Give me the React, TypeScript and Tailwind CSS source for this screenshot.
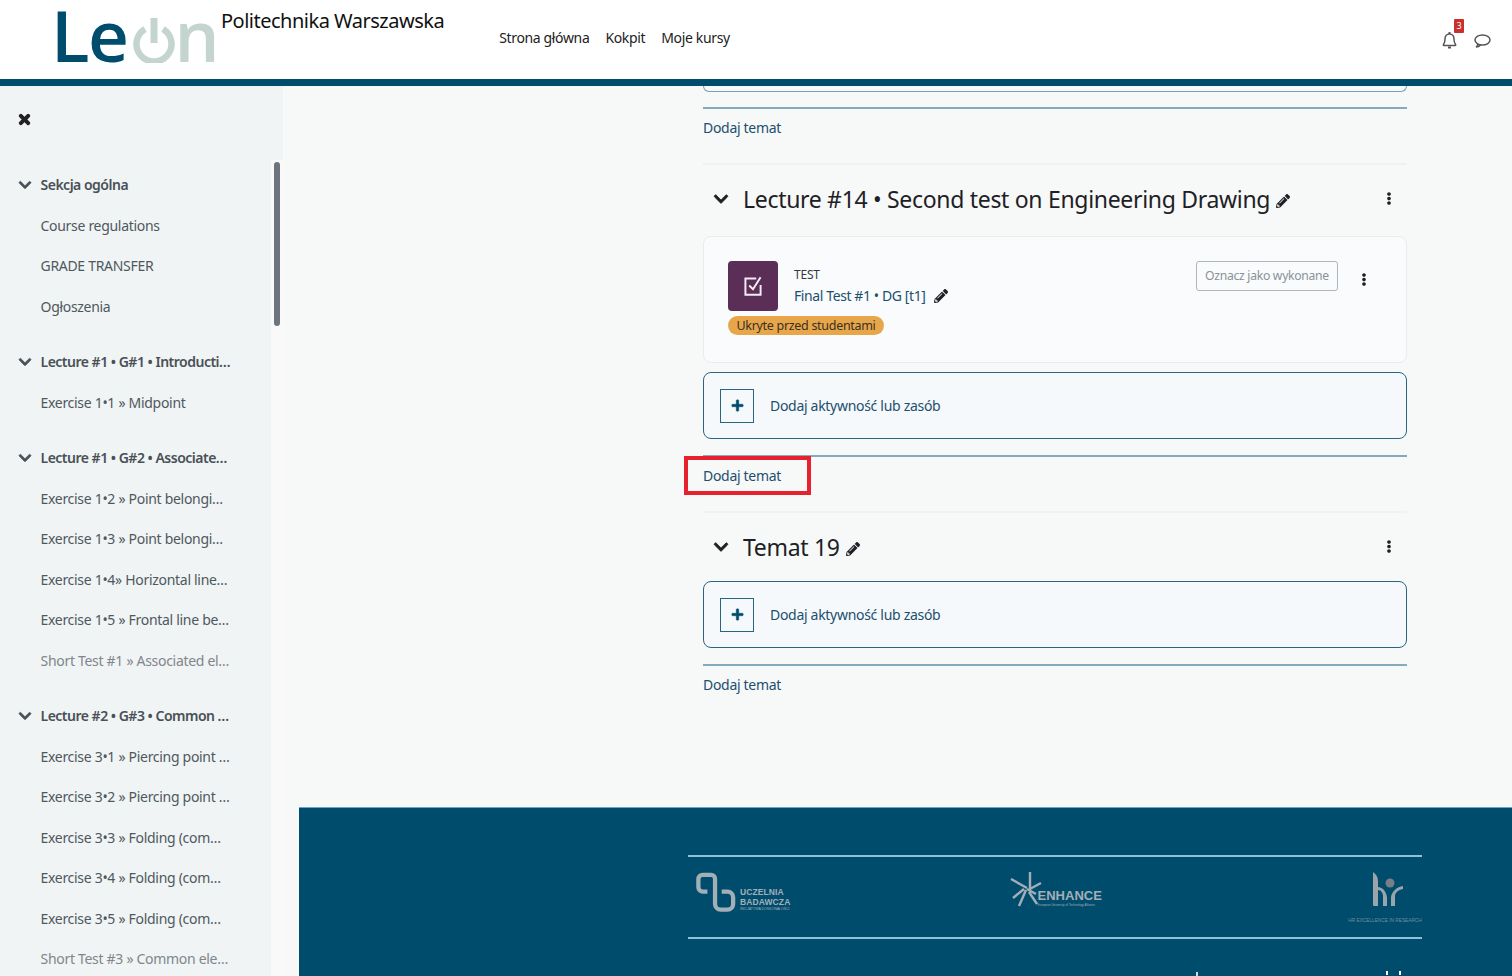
import { FaChevronDown, FaEllipsisV, FaPencilAlt, FaPlus, FaTimes } from "react-icons/fa";

const outline = [
  { title: "Sekcja ogólna", items: ["Course regulations", "GRADE TRANSFER", "Ogłoszenia"] },
  { title: "Lecture #1 • G#1 • Introducti…", items: ["Exercise 1•1 » Midpoint"] },
  {
    title: "Lecture #1 • G#2 • Associate…",
    items: [
      "Exercise 1•2 » Point belongi…",
      "Exercise 1•3 » Point belongi…",
      "Exercise 1•4» Horizontal line…",
      "Exercise 1•5 » Frontal line be…",
      "Short Test #1 » Associated el…",
    ],
  },
  {
    title: "Lecture #2 • G#3 • Common …",
    items: [
      "Exercise 3•1 » Piercing point …",
      "Exercise 3•2 » Piercing point …",
      "Exercise 3•3 » Folding (com…",
      "Exercise 3•4 » Folding (com…",
      "Exercise 3•5 » Folding (com…",
      "Short Test #3 » Common ele…",
    ],
  },
];

function Header() {
  return (
    <header className="h-[86px] shrink-0 bg-white border-b-[7px] border-[#004c6d] flex items-start">
      <div className="ml-[51px] mt-[5px] w-[167px] flex items-start font-['Open_Sans'] font-semibold text-[71px] leading-[60px] tracking-[-1.5px]">
        <span className="text-[#004c6d]">Le</span>
        <svg viewBox="0 0 42 45" className="w-[42px] h-[45px] mt-[13px] ml-[5px] shrink-0" fill="none" stroke="#c3d5ce">
          <path d="M12 11 a17.5 17.5 0 1 0 18 0" strokeWidth="6.5" />
          <path d="M21 0 V25" strokeWidth="7" />
        </svg>
        <span className="text-[#c3d5ce]">n</span>
      </div>
      <div className="ml-[3px] mt-[7px] text-[20px] leading-[28px] tracking-[-0.5px] text-[#111]">Politechnika Warszawska</div>
      <nav className="ml-[55px] mt-[28px] flex gap-[16px] text-[14px] leading-[20px] tracking-[-0.35px] text-[#222]">
        <span>Strona główna</span>
        <span>Kokpit</span>
        <span>Moje kursy</span>
      </nav>
      <div className="ml-auto mr-[21px] mt-[30px] flex items-start gap-[14px]">
        <div className="relative">
          <svg viewBox="0 0 18 20" className="w-[19px] h-[20px]" fill="none" stroke="#555" strokeWidth="1.5">
            <path d="M3 14.5c1-1.2 1.5-2.500 1.5-5.500 0-3 2-5 4.500-5s4.500 2 4.500 5c0 3 .5 4.300 1.500 5.500.5.600.2 1-.4 1H3.400c-.6 0-.9-.4-.4-1z" />
            <path d="M7.5 17.500h3" strokeWidth="2" />
            <path d="M9 2v2" strokeWidth="2" />
          </svg>
          <span className="absolute left-[14px] -top-[11px] w-[10px] h-[14px] rounded-[1px] bg-[#c9302c] text-white text-[9px] leading-[14px] text-center">3</span>
        </div>
        <svg viewBox="0 0 18 16" className="w-[18px] h-[16px] mt-[3px]" fill="none" stroke="#555" strokeWidth="1.5">
          <ellipse cx="9.5" cy="7" rx="7.5" ry="5" />
          <path d="M5 11c0 1.500-1 2.500-2 3 2 0 3.500-.7 4.500-2" />
        </svg>
      </div>
    </header>
  );
}

function Sidebar() {
  return (
    <aside className="w-[299px] shrink-0 flex flex-col min-h-0">
      <div className="w-[283px] h-[74px] shrink-0 bg-[#f0f4f4] pl-[18px] pt-[26px] text-[#222]">
        <FaTimes className="w-[13px] h-[15px]" stroke="currentColor" strokeWidth={40} />
      </div>
      <div className="flex flex-1 min-h-0">
        <div className="w-[271px] bg-[#f0f4f4] pt-[4.4px] overflow-hidden text-[14px] tracking-[-0.3px] text-[#4f5860]">
          {outline.map((section) => (
            <div key={section.title} className="mb-[15px]">
              <div className="h-[40.52px] flex items-center pl-[18px] font-semibold tracking-[-0.5px] text-[#495057]">
                <FaChevronDown className="w-[14px] h-[14px] mr-[8.5px] shrink-0" stroke="currentColor" strokeWidth={25} />
                <span className="whitespace-nowrap">{section.title}</span>
              </div>
              {section.items.map((item) => (
                <div
                  key={item}
                  className={`h-[40.52px] flex items-center pl-[40.5px] whitespace-nowrap ${item.startsWith("Short") ? "text-[#80868c]" : ""}`}
                >
                  {item}
                </div>
              ))}
            </div>
          ))}
        </div>
        <div className="w-[12px] bg-[#f9f9fa] pt-[2px] pl-[3px]">
          <div className="w-[6px] h-[164px] rounded-full bg-[#6c757d]" />
        </div>
      </div>
    </aside>
  );
}

function AddTopic({ marked = false, top = "mt-[16px]" }: { marked?: boolean; top?: string }) {
  return (
    <div className={`relative ${top}`}>
      <div className="border-t-2 border-[#86a9bc] pt-[9px] text-[14px] leading-[20px] tracking-[-0.3px] text-[#1d4f6f]">Dodaj temat</div>
      {marked && <div className="absolute -left-[19px] top-[1px] w-[127px] h-[39px] border-4 border-[#e8212e]" />}
    </div>
  );
}

function SectionTitle({ title, gap }: { title: string; gap: string }) {
  return (
    <>
      <div className="mt-[25px] border-t-2 border-[#f0f1f1]" />
      <div className={`mt-[16px] h-[36px] flex items-center pl-[10px] pr-[12px] text-[#1d2125] ${gap}`}>
        <FaChevronDown className="w-[16px] h-[16px] mr-[14px] text-[#1d2125]" stroke="currentColor" strokeWidth={25} />
        <span className="text-[23px] leading-[36px] tracking-[-0.31px]">{title}</span>
        <FaPencilAlt className="w-[14px] h-[14px] ml-[6px] mt-[4px]" />
        <FaEllipsisV className="w-[12px] h-[13px] ml-auto mb-[2px]" />
      </div>
    </>
  );
}

function AddActivity() {
  return (
    <div className="h-[67px] rounded-lg border border-[#2b6480] bg-[#f5f9fb] flex items-center pl-[16px] text-[14px] tracking-[-0.3px] text-[#1d4f6f]">
      <div className="w-[34px] h-[34px] border border-[#2b6480] flex items-center justify-center text-[#004c6d]">
        <FaPlus className="w-[13px] h-[13px]" stroke="currentColor" strokeWidth={20} />
      </div>
      <span className="ml-[16px]">Dodaj aktywność lub zasób</span>
    </div>
  );
}

function TestCard() {
  return (
    <div className="h-[127px] rounded-lg border border-[#e9ecef] bg-[#f9fbfc] pl-[24px] pt-[24px] pr-[36px] flex justify-between items-start mb-[9px]">
      <div>
        <div className="flex">
          <div className="w-[50px] h-[50px] rounded-[4px] bg-[#5b2e57] flex items-center justify-center">
            <svg viewBox="0 0 24 24" className="w-[26px] h-[26px]" fill="none" stroke="#f4eef3" strokeWidth="1.8">
              <path d="M19 11v9H5V5h10" />
              <path d="M8.5 11.5l3.5 3.5 7-11" />
            </svg>
          </div>
          <div className="ml-[16px] text-[#1d4f6f]">
            <div className="mt-[5px] text-[12px] leading-[18px] tracking-[-0.2px] text-[#343a40]">TEST</div>
            <div className="mt-[2px] flex items-center text-[14px] leading-[20px] tracking-[-0.4px]">
              Final Test #1 • DG [t1]
              <FaPencilAlt className="w-[14px] h-[14px] ml-[9px] text-[#1d2125]" />
            </div>
          </div>
        </div>
        <div className="mt-[5px] w-[156px] h-[19px] rounded-full bg-[#e8a64a] text-center text-[12.5px] leading-[19px] tracking-[-0.3px] text-[#3a3022]">Ukryte przed studentami</div>
      </div>
      <div className="flex items-center">
        <div className="w-[142px] h-[30px] rounded-[3px] border border-[#adb5bd] text-center text-[12.2px] leading-[28px] tracking-[-0.3px] text-[#8b9298]">Oznacz jako wykonane</div>
        <FaEllipsisV className="w-[12px] h-[13px] ml-[20px] mt-[6px] text-[#1d2125]" />
      </div>
    </div>
  );
}

function FooterLogos() {
  return (
    <div className="mt-[47px] ml-[389px] w-[734px] h-[84px] border-y-2 border-[#8fc0dc] flex justify-between text-[#a3afb7]">
      <div className="ml-[8px] mt-[15px] flex">
        <svg viewBox="0 0 42 42" className="w-[40px] h-[41px] shrink-0" fill="none" stroke="#a3afb7" strokeWidth="4.5">
          <path d="M12 20H7a4.5 4.5 0 0 1-4.5-4.5V7A4.5 4.5 0 0 1 7 2.5h9a4 4 0 0 1 4 4V33a6 6 0 0 0 6 6h7a6 6 0 0 0 6-6V26a6 6 0 0 0-6-6H27" />
        </svg>
        <div className="ml-[4px] mt-[15px] font-['Liberation_Sans'] font-bold text-[8.5px] leading-[10px] tracking-[0.1px] whitespace-nowrap">
          <div>UCZELNIA</div>
          <div>BADAWCZA</div>
          <div className="text-[3.5px] leading-[5px] font-normal tracking-normal">INICJATYWA DOSKONAŁOŚCI</div>
        </div>
      </div>
      <div className="mt-[15px] mr-[27px] flex">
        <svg viewBox="0 0 32 36" className="w-[32px] h-[36px] shrink-0" fill="none" stroke="#a3afb7" strokeWidth="2.4">
          <path d="M20 0V17M1 7L17 16M31 11L18 18M26 22L17 17M27 32L19 20M9 34L16 18M3 26L14 17" />
        </svg>
        <div className="-ml-[4px] mt-[17px] font-['Liberation_Sans'] font-bold text-[13px] leading-[14px] whitespace-nowrap">
          <div>ENHANCE</div>
          <div className="text-[3px] leading-[4px] font-normal">European University of Technology Alliance</div>
        </div>
      </div>
      <div className="mt-[15px] w-[74px] flex flex-col items-center">
        <svg viewBox="0 0 30 35" className="ml-[6px] w-[30px] h-[35px] shrink-0" fill="#9aa4ab">
          <path d="M0 0c3 2 5 5 5 9v25H1a1 1 0 0 1-1-1z" />
          <path d="M5 15c6 1 8 5 9 10v9h-4V24c0-3-2-6-5-6z" />
          <path d="M30 14c-6 1-11 5-12 11v9h4V24c0-3 3-6 8-7z" />
          <circle cx="17" cy="11" r="4.5" fill="#7a7f87" />
        </svg>
        <div className="mt-[10px] whitespace-nowrap text-[4.75px] leading-[8px] font-['Liberation_Sans'] text-[#6f8da1]">HR EXCELLENCE IN RESEARCH</div>
      </div>
    </div>
  );
}

export default function App() {
  return (
    <div className="h-screen flex flex-col overflow-hidden bg-[#f7f8f8] font-['Noto_Sans',sans-serif]">
      <Header />
      <div className="flex flex-1 min-h-0">
        <Sidebar />
        <main className="flex-1 flex flex-col min-w-0">
          <div className="h-[721px] shrink-0 pl-[404px] w-[1108px]">
            <div className="h-[6px] rounded-b-lg border-x border-b border-[#7b9fb3]" />
            <AddTopic top="mt-[15px]" />
            <SectionTitle title="Lecture #14 • Second test on Engineering Drawing" gap="mb-[19px]" />
            <TestCard />
            <AddActivity />
            <AddTopic marked />
            <SectionTitle title="Temat 19" gap="mb-[16px]" />
            <AddActivity />
            <AddTopic />
          </div>
          <footer className="flex-1 bg-[#004c6d] border-t border-[#6ba3c4] overflow-hidden">
            <FooterLogos />
            <div className="mt-[32px] ml-[897px] flex">
              <div className="w-[2px] h-[4px] mt-[1px] bg-white/80" />
              <div className="w-[2px] h-[4px] ml-[188px] bg-white" />
              <div className="w-[2px] h-[4px] ml-[11px] bg-white" />
            </div>
          </footer>
        </main>
      </div>
    </div>
  );
}
